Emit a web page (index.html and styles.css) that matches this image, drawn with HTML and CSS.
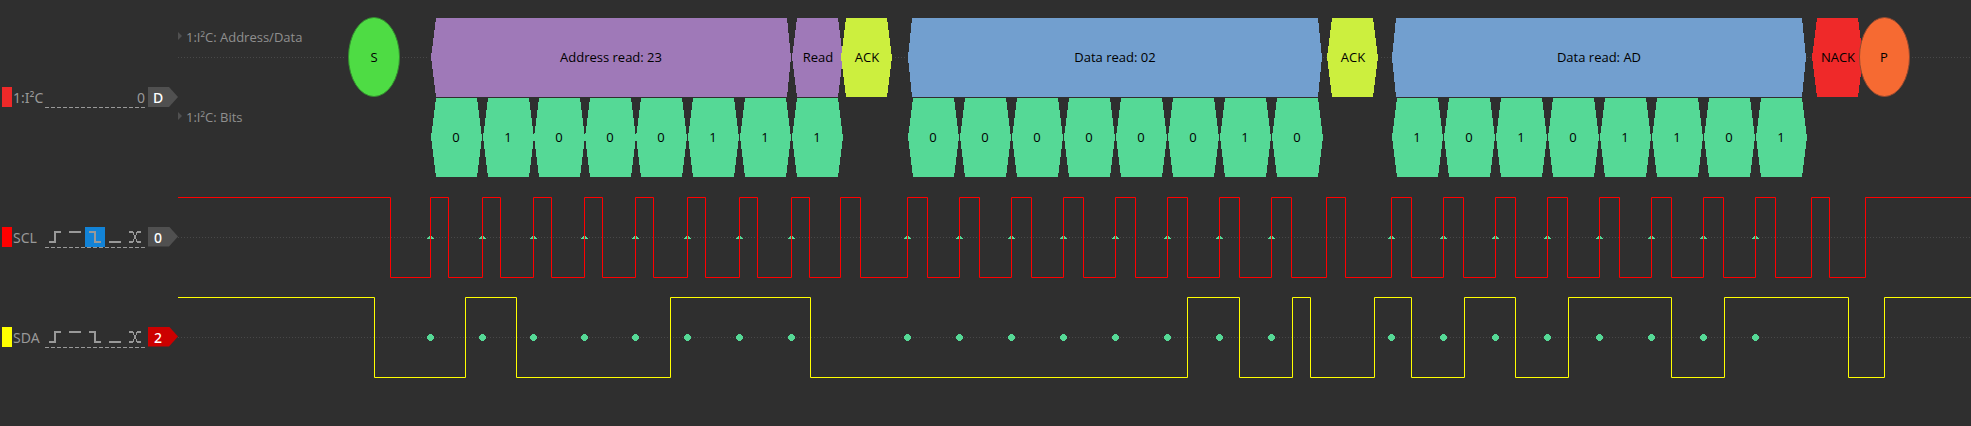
FILE: index.html
```html
<!DOCTYPE html>
<html lang="en">
<head>
<meta charset="utf-8">
<title>I²C logic trace</title>
<link rel="stylesheet" href="styles.css">
</head>
<body>
<svg class="symbols" aria-hidden="true">
  <defs>
    <symbol id="rising" viewBox="0 0 20 20"><path d="M4 15H10V5H16"/></symbol>
    <symbol id="high" viewBox="0 0 20 20"><path d="M4 5H16"/></symbol>
    <symbol id="falling" viewBox="0 0 20 20"><path d="M4 5H10V15H16"/></symbol>
    <symbol id="low" viewBox="0 0 20 20"><path d="M4 15H16"/></symbol>
    <symbol id="change" viewBox="0 0 20 20"><path d="M4 5H8M12 5H16M4 15H8M12 15H16M10 8V12"/><path stroke-width="1" d="M8.500 5V8M11.500 5V8M8.500 12V15M11.500 12V15"/></symbol>
    <path id="bit" d="M0 137.500L5 98H46L51 137.500L46 177H5Z"/>
    <path id="word" d="M0 57.500L5 18H46L51 57.500L46 97H5Z"/>
    <path id="edge" d="M-1 236H2V237H3V238H4V239H-3V238H-2V237H-1Z"/>
    <path id="dot" d="M-1 334H2V335H3V336H4V339H3V340H2V341H-1V340H-2V339H-3V336H-2V335H-1Z"/>
  </defs>
</svg>

<main class="view">
  <section class="signal decoder">
    <header class="head">
      <span class="swatch swatch-i2c"></span>
      <span class="name">1:I²C</span>
      <span class="options value">0</span>
      <span class="tag"><span>D</span></span>
    </header>
    <svg class="trace" role="img" aria-label="Decoded I²C data">
      <g transform="translate(-178 0)">
        <path class="axis" d="M178 57.500H346M402 57.500H429M895 57.500H906M1323 57.500H1327M1381 57.500H1391M1807 57.500H1811M1912 57.500H6000"/>
        <path class="row-mark" d="M178 32L182 36L178 40ZM178 112L182 116L178 120Z"/>
        <g class="row-name">
          <text x="186" y="42">1:I²C: Address/Data</text>
          <text x="186" y="122">1:I²C: Bits</text>
        </g>
        <g class="shape">
          <path class="address" d="M431 57.500L436 18H787L791 57.500L787 97H436Z"/>
          <use class="address" href="#word" x="792"/>
          <use class="ack" href="#word" x="841"/>
          <path class="data" d="M908 57.500L912 18H1318L1322 57.500L1318 97H912Z"/>
          <use class="ack" href="#word" x="1327"/>
          <path class="data" d="M1392 57.500L1396 18H1802L1806 57.500L1802 97H1396Z"/>
          <use class="nack" href="#word" x="1812"/>
        </g>
        <ellipse class="start" cx="374" cy="57" rx="25.500" ry="39.500"/>
        <ellipse class="stop" cx="1884.500" cy="57" rx="25" ry="39.500"/>
        <g class="shape bits">
          <use href="#bit" x="431"/><use href="#bit" x="483"/><use href="#bit" x="534"/><use href="#bit" x="585"/>
          <use href="#bit" x="636"/><use href="#bit" x="688"/><use href="#bit" x="740"/><use href="#bit" x="792"/>
          <use href="#bit" x="908"/><use href="#bit" x="960"/><use href="#bit" x="1012"/><use href="#bit" x="1064"/>
          <use href="#bit" x="1116"/><use href="#bit" x="1168"/><use href="#bit" x="1220"/><use href="#bit" x="1272"/>
          <use href="#bit" x="1392"/><use href="#bit" x="1444"/><use href="#bit" x="1496"/><use href="#bit" x="1548"/>
          <use href="#bit" x="1600"/><use href="#bit" x="1652"/><use href="#bit" x="1704"/><use href="#bit" x="1756"/>
        </g>
        <g class="label">
          <text x="374" y="62">S</text>
          <text x="611" y="62">Address read: 23</text>
          <text x="818" y="62">Read</text>
          <text x="867" y="62">ACK</text>
          <text x="1115" y="62">Data read: 02</text>
          <text x="1353" y="62">ACK</text>
          <text x="1599" y="62">Data read: AD</text>
          <text x="1838" y="62">NACK</text>
          <text x="1884" y="62">P</text>
          <text x="456" y="142">0</text><text x="508" y="142">1</text><text x="559" y="142">0</text><text x="610" y="142">0</text>
          <text x="661" y="142">0</text><text x="713" y="142">1</text><text x="765" y="142">1</text><text x="817" y="142">1</text>
          <text x="933" y="142">0</text><text x="985" y="142">0</text><text x="1037" y="142">0</text><text x="1089" y="142">0</text>
          <text x="1141" y="142">0</text><text x="1193" y="142">0</text><text x="1245" y="142">1</text><text x="1297" y="142">0</text>
          <text x="1417" y="142">1</text><text x="1469" y="142">0</text><text x="1521" y="142">1</text><text x="1573" y="142">0</text>
          <text x="1625" y="142">1</text><text x="1677" y="142">1</text><text x="1729" y="142">0</text><text x="1781" y="142">1</text>
        </g>
      </g>
    </svg>
  </section>

  <section class="signal">
    <header class="head">
      <span class="swatch swatch-scl"></span>
      <span class="name">SCL</span>
      <span class="options">
        <button class="trigger" aria-label="SCL rising edge"><svg><use href="#rising"/></svg></button>
        <button class="trigger" aria-label="SCL high"><svg><use href="#high"/></svg></button>
        <button class="trigger active" aria-label="SCL falling edge" aria-pressed="true"><svg><use href="#falling"/></svg></button>
        <button class="trigger" aria-label="SCL low"><svg><use href="#low"/></svg></button>
        <button class="trigger" aria-label="SCL any change"><svg><use href="#change"/></svg></button>
      </span>
      <span class="tag"><span>0</span></span>
    </header>
    <svg class="trace" role="img" aria-label="SCL waveform">
      <g transform="translate(-178 -187)">
        <path class="axis" d="M178 237.500H6000"/>
        <g class="shape bits">
          <use href="#edge" x="430"/><use href="#edge" x="482"/><use href="#edge" x="533"/><use href="#edge" x="584"/>
          <use href="#edge" x="635"/><use href="#edge" x="687"/><use href="#edge" x="739"/><use href="#edge" x="791"/>
          <use href="#edge" x="907"/><use href="#edge" x="959"/><use href="#edge" x="1011"/><use href="#edge" x="1063"/>
          <use href="#edge" x="1115"/><use href="#edge" x="1167"/><use href="#edge" x="1219"/><use href="#edge" x="1271"/>
          <use href="#edge" x="1391"/><use href="#edge" x="1443"/><use href="#edge" x="1495"/><use href="#edge" x="1547"/>
          <use href="#edge" x="1599"/><use href="#edge" x="1651"/><use href="#edge" x="1703"/><use href="#edge" x="1755"/>
        </g>
        <path class="wave scl" d="M178 197.500H390.500V277.500H430.500V197.500H448.500V277.500H482.500V197.500H500.500V277.500H533.500V197.500H551.500V277.500H584.500V197.500H602.500V277.500H635.500V197.500H653.500V277.500H687.500V197.500H705.500V277.500H739.500V197.500H757.500V277.500H791.500V197.500H809.500V277.500H840.500V197.500H860.500V277.500H907.500V197.500H927.500V277.500H959.500V197.500H979.500V277.500H1011.500V197.500H1031.500V277.500H1063.500V197.500H1083.500V277.500H1115.500V197.500H1135.500V277.500H1167.500V197.500H1187.500V277.500H1219.500V197.500H1239.500V277.500H1271.500V197.500H1291.500V277.500H1326.500V197.500H1345.500V277.500H1391.500V197.500H1411.500V277.500H1443.500V197.500H1463.500V277.500H1495.500V197.500H1515.500V277.500H1547.500V197.500H1567.500V277.500H1599.500V197.500H1619.500V277.500H1651.500V197.500H1671.500V277.500H1703.500V197.500H1723.500V277.500H1755.500V197.500H1775.500V277.500H1811.500V197.500H1829.500V277.500H1865.500V197.500H6000"/>
      </g>
    </svg>
  </section>

  <section class="signal">
    <header class="head">
      <span class="swatch swatch-sda"></span>
      <span class="name">SDA</span>
      <span class="options">
        <button class="trigger" aria-label="SDA rising edge"><svg><use href="#rising"/></svg></button>
        <button class="trigger" aria-label="SDA high"><svg><use href="#high"/></svg></button>
        <button class="trigger" aria-label="SDA falling edge"><svg><use href="#falling"/></svg></button>
        <button class="trigger" aria-label="SDA low"><svg><use href="#low"/></svg></button>
        <button class="trigger" aria-label="SDA any change"><svg><use href="#change"/></svg></button>
      </span>
      <span class="tag tag-red"><span>2</span></span>
    </header>
    <svg class="trace" role="img" aria-label="SDA waveform">
      <g transform="translate(-178 -287)">
        <path class="axis" d="M178 337.500H6000"/>
        <path class="wave sda" d="M178 297.500H374.500V377.500H465.500V297.500H516.500V377.500H670.500V297.500H810.500V377.500H1187.500V297.500H1239.500V377.500H1292.500V297.500H1310.500V377.500H1374.500V297.500H1411.500V377.500H1464.500V297.500H1515.500V377.500H1568.500V297.500H1671.500V377.500H1724.500V297.500H1848.500V377.500H1884.500V297.500H6000"/>
        <g class="shape bits">
          <use href="#dot" x="430"/><use href="#dot" x="482"/><use href="#dot" x="533"/><use href="#dot" x="584"/>
          <use href="#dot" x="635"/><use href="#dot" x="687"/><use href="#dot" x="739"/><use href="#dot" x="791"/>
          <use href="#dot" x="907"/><use href="#dot" x="959"/><use href="#dot" x="1011"/><use href="#dot" x="1063"/>
          <use href="#dot" x="1115"/><use href="#dot" x="1167"/><use href="#dot" x="1219"/><use href="#dot" x="1271"/>
          <use href="#dot" x="1391"/><use href="#dot" x="1443"/><use href="#dot" x="1495"/><use href="#dot" x="1547"/>
          <use href="#dot" x="1599"/><use href="#dot" x="1651"/><use href="#dot" x="1703"/><use href="#dot" x="1755"/>
        </g>
      </g>
    </svg>
  </section>
</main>
</body>
</html>
```
FILE: styles.css
```css
* {
  box-sizing: border-box;
}

body {
  margin: 0;
  background: #2f2f2f;
  color: #999999;
  font-family: "Noto Sans", "Open Sans", sans-serif;
  font-size: 14px;
  line-height: 20px;
}

.symbols {
  display: none;
}

.view {
  display: flex;
  flex-direction: column;
}

.signal {
  display: grid;
  grid-template-columns: 178px 1fr;
}

.head {
  display: grid;
  grid-template-columns: 10px 33px 103px 30px;
  align-content: center;
  padding-left: 2px;
}

.decoder .head {
  padding-top: 8px;
}

.swatch {
  height: 20px;
}

.swatch-i2c {
  background: #ef2929;
}

.swatch-scl {
  background: #ff0000;
}

.swatch-sda {
  background: #ffff00;
}

.name {
  height: 20px;
  padding-left: 1px;
  line-height: 22px;
}

.options {
  display: flex;
  width: 100px;
  height: 21px;
  background: repeating-linear-gradient(to right, #999999 0 4px, transparent 4px 6px) bottom / 100% 1px no-repeat;
}

.value {
  justify-content: flex-end;
  line-height: 22px;
}

.trigger {
  width: 20px;
  height: 20px;
  padding: 0;
  border: 0;
  background: transparent;
  cursor: pointer;
}

.trigger.active {
  background: #1283d7;
}

.trigger svg {
  display: block;
  width: 20px;
  height: 20px;
  fill: none;
  stroke: #999999;
  stroke-width: 2;
}

.tag {
  height: 20px;
  padding-right: 10px;
  background: #505050;
  clip-path: polygon(0 0, 21px 0, 100% 50%, 21px 100%, 0 100%);
  color: #ffffff;
  font-weight: 500;
  line-height: 22px;
  text-align: center;
}

.tag-red {
  background: #cc0000;
}

.trace {
  display: block;
  width: 100%;
  height: 100px;
  overflow: hidden;
}

.decoder .trace {
  height: 187px;
}

.axis {
  fill: none;
  stroke: #484848;
  stroke-dasharray: 1 2;
}

.row-mark {
  fill: #505050;
}

.row-name,
.label {
  font-family: "Open Sans", "Noto Sans", sans-serif;
  font-size: 13px;
}

.row-name {
  fill: #8f8f8f;
}

.label {
  fill: #000000;
  text-anchor: middle;
}

.shape {
  shape-rendering: crispEdges;
}

.address {
  fill: #9f79b8;
}

.ack {
  fill: #ccef3e;
}

.data {
  fill: #729fcf;
}

.nack {
  fill: #ef2929;
}

.start {
  fill: #4edc44;
  stroke: #348c2f;
}

.stop {
  fill: #f66a32;
  stroke: #92492f;
}

.bits {
  fill: #55d996;
}

.wave {
  fill: none;
}

.scl {
  stroke: #ff0000;
}

.sda {
  stroke: #ffff00;
}
```
